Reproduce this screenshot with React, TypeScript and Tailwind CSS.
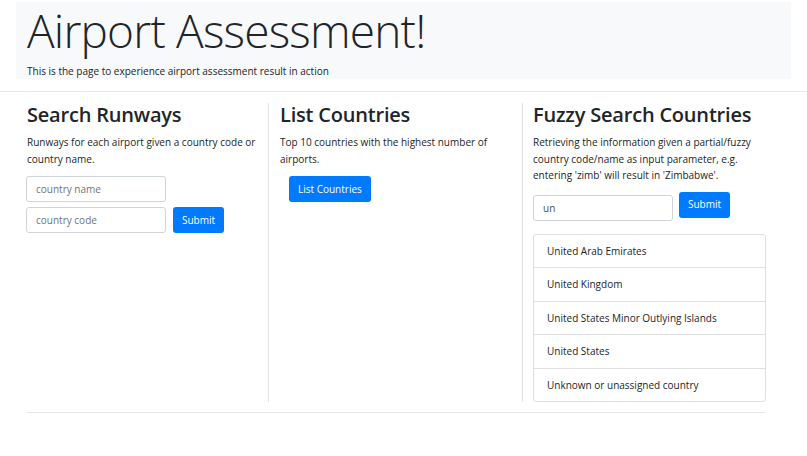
const RESULTS = [
  "United Arab Emirates",
  "United Kingdom",
  "United States Minor Outlying Islands",
  "United States",
  "Unknown or unassigned country",
];

function Heading({ children }: { children: React.ReactNode }) {
  return (
    <h2 className="mt-[2px] whitespace-nowrap text-[20px] font-semibold leading-[20px] tracking-[-0.2px]">
      {children}
    </h2>
  );
}

function TextInput({ placeholder, value }: { placeholder?: string; value?: string }) {
  return (
    <input
      className="h-[26px] w-[140px] rounded-[3px] border border-[#ced4da] bg-white px-[9px] text-[10px] text-[#495057] outline-none placeholder:text-[#6c757d]"
      placeholder={placeholder}
      defaultValue={value}
    />
  );
}

function Button({ children }: { children: React.ReactNode }) {
  return (
    <button className="h-[26px] rounded-[3px] bg-[#007bff] px-[9px] text-[10px] text-white">
      {children}
    </button>
  );
}

export default function App() {
  return (
    <div className="min-h-[456px] bg-white font-['Open_Sans',sans-serif] text-[10px] leading-[16.5px] text-[#212529]">
      <header className="mx-4 mt-[2px] h-[77px] bg-[#f8f9fa] px-[11px] pt-[5px]">
        <h1 className="text-[46px] font-light leading-[46px] tracking-[-0.8px]">Airport Assessment!</h1>
        <p className="mt-[10px]">This is the page to experience airport assessment result in action</p>
      </header>

      <hr className="mt-3 border-[#e6e6e6]" />

      <main className="mx-4 mt-[11px] grid grid-cols-[252px_254px_254px]">
        <section className="pl-[10px] pr-[8px]">
          <div className="pl-px">
            <Heading>Search Runways</Heading>
            <p className="mt-[9px]">Runways for each airport given a country code or country name.</p>
          </div>
          <div className="mt-[9px] flex flex-col gap-[5px]">
            <TextInput placeholder="country name" />
            <div className="flex gap-[7px]">
              <TextInput placeholder="country code" />
              <Button>Submit</Button>
            </div>
          </div>
        </section>

        <section className="border-l border-[#dee2e6] px-[11px]">
          <Heading>List Countries</Heading>
          <p className="mt-[9px]">Top 10 countries with the highest number of airports.</p>
          <div className="mt-[9px] pl-[9px]">
            <Button>List Countries</Button>
          </div>
        </section>

        <section className="border-l border-[#dee2e6] pl-[10px] pr-[10px]">
          <Heading>Fuzzy Search Countries</Heading>
          <p className="mt-[9px]">
            Retrieving the information given a partial/fuzzy country code/name as input parameter, e.g.
            entering 'zimb' will result in 'Zimbabwe'.
          </p>
          <div className="mt-[8px] flex items-start gap-[6px]">
            <div className="mt-[3px]">
              <TextInput value="un" />
            </div>
            <Button>Submit</Button>
          </div>
          <ul className="mt-[13px] rounded-[3px] border border-[#dfdfdf]">
            {RESULTS.map((name, i) => (
              <li key={name} className={`px-[13px] py-[8px] ${i > 0 ? "border-t border-[#dfdfdf]" : ""}`}>
                {name}
              </li>
            ))}
          </ul>
        </section>
      </main>

      <div className="ml-[26px] mr-[41px] mt-[10px] border-t border-[#e6e6e6]" />
    </div>
  );
}
